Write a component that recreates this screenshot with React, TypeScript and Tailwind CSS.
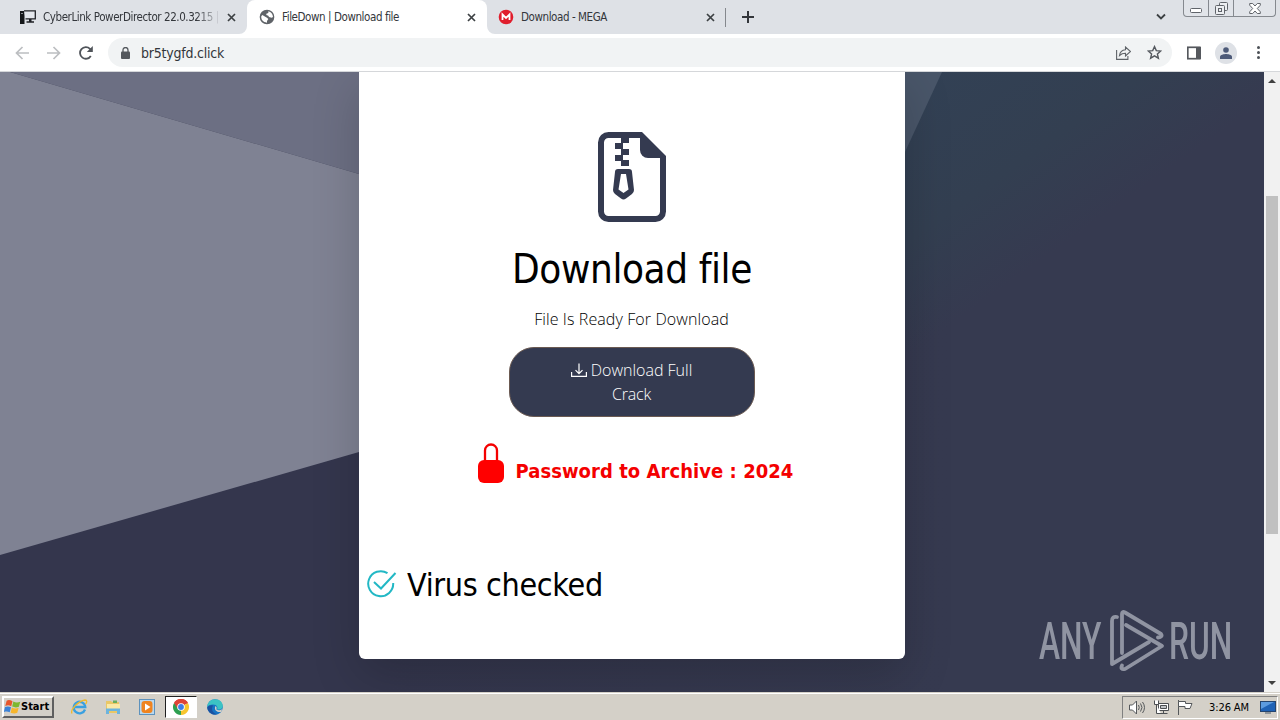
import type { ReactNode } from "react";

interface TabProps {
  title: string;
  icon: ReactNode;
  active?: boolean;
  faded?: boolean;
  className: string;
  titleClass: string;
}

function CloseIcon() {
  return (
    <svg className="h-[9px] w-[9px] shrink-0 text-[#3c4043]" viewBox="0 0 9 9" stroke="currentColor" strokeWidth={1.7}>
      <path d="M1 1l7 7M8 1l-7 7" />
    </svg>
  );
}

function Tab({ title, icon, active, faded, className, titleClass }: TabProps) {
  return (
    <div
      className={`relative flex h-[34px] shrink-0 items-center ${className} ${
        active ? "rounded-t-lg bg-white" : ""
      }`}
    >
      {icon}
      <span
        className={`h-4 flex-1 whitespace-nowrap text-[11.5px] leading-4 tracking-[-0.42px] text-[#33363b] ${titleClass} ${
          faded ? "[mask-image:linear-gradient(to_right,black_86%,transparent_100%)]" : ""
        }`}
      >
        {title}
      </span>
      <CloseIcon />
      {active && (
        <>
          <svg className="absolute -left-2 bottom-0 h-2 w-2" viewBox="0 0 8 8" fill="#fff">
            <path d="M8 0v8H0a8 8 0 0 0 8-8z" />
          </svg>
          <svg className="absolute -right-2 bottom-0 h-2 w-2" viewBox="0 0 8 8" fill="#fff">
            <path d="M0 0v8h8a8 8 0 0 1-8-8z" />
          </svg>
        </>
      )}
    </div>
  );
}

function TabStrip() {
  return (
    <div className="flex h-[34px] shrink-0 bg-[#dee1e6]">
      <Tab
        className="w-[247px] pl-5 pr-[11px]"
        titleClass="ml-[7px] mr-[6px]"
        faded
        title="CyberLink PowerDirector 22.0.3215 |"
        icon={
          <svg className="h-4 w-4 shrink-0" viewBox="0 0 16 16">
            <path d="M0 2h4.500v13H0z" fill="#15171a" />
            <path d="M1 4.500h2" stroke="#8a8d92" />
            <path d="M4 1.800h11.300v8H5.500" fill="#e4e7ec" stroke="#202226" strokeWidth={1.300} />
            <path d="M9 10h2.500v2.500H9zM6.500 12.300h7.500v1.500H6.500z" fill="#202226" />
          </svg>
        }
      />
      <Tab
        className="w-60 pl-3 pr-[11px]"
        titleClass="ml-[7px] mr-2"
        active
        title="FileDown | Download file"
        icon={
          <svg className="h-4 w-4 shrink-0" viewBox="0 0 24 24" fill="#5f6368">
            <path d="M12 1a11 11 0 1 0 0 22 11 11 0 0 0 0-22zM5 9l5 3 2 1 2 2-2 3v2.500C6 20 3 16 3.400 11zM14 3.500c4 .8 6.800 4.400 7 8.500l-2 1-4-1-1-2-3-1V7l3-1z" fillRule="evenodd" />
          </svg>
        }
      />
      <Tab
        className="w-[238px] pl-[11px] pr-[10px]"
        titleClass="ml-[7px] mr-2"
        title="Download - MEGA"
        icon={
          <svg className="h-4 w-4 shrink-0" viewBox="0 0 16 16">
            <circle cx="8" cy="8" r="7.300" fill="#e01e2d" />
            <path d="M4.500 11V5.500L8 9l3.500-3.500V11" fill="none" stroke="#fff" strokeWidth={1.8} />
          </svg>
        }
      />
      <div className="mt-2 h-[19px] w-px bg-[#85888d]" />
      <svg className="ml-4 mt-[11px] h-3 w-3 text-[#33363b]" viewBox="0 0 12 12" stroke="currentColor" strokeWidth={2}>
        <path d="M6 0v12M0 6h12" />
      </svg>
      <svg className="ml-auto mr-[17px] mt-[13px] h-[8px] w-[10px] text-[#3c4043]" viewBox="0 0 10 8" fill="none" stroke="currentColor" strokeWidth={1.8}>
        <path d="M1 1.500l4 4 4-4" />
      </svg>
      <div className="mr-1 flex h-[17px] w-[93px] rounded-b-[4px] border border-t-0 border-[#85898f] bg-[#e1e4e9]">
        <div className="flex w-[25px] justify-center border-r border-[#85898f] pt-2">
          <svg className="h-[5px] w-3" viewBox="0 0 12 5" fill="#fff" stroke="#60646a">
            <rect x=".5" y=".5" width="11" height="4" rx="1" />
          </svg>
        </div>
        <div className="flex w-[25px] justify-center border-r border-[#85898f] pt-[2px]">
          <svg className="h-[13px] w-[13px]" viewBox="0 0 13 13" fill="#eceef1" stroke="#60646a">
            <rect x="4.500" y=".5" width="8" height="8" rx="1" />
            <rect x=".5" y="3.500" width="9" height="9" rx="1" />
            <rect x="3.500" y="6.500" width="3" height="3" />
          </svg>
        </div>
        <div className="flex flex-1 justify-center pt-[3px]">
          <svg className="h-[11px] w-3" viewBox="0 0 12 11" fill="#fff" stroke="#60646a">
            <path d="M.7.5h3L6 3 8.300.5h3v1.700L8.300 5.500l3 3.300v1.700h-3L6 8l-2.300 2.500h-3V8.800l3-3.300-3-3.300z" />
          </svg>
        </div>
      </div>
    </div>
  );
}

function Toolbar() {
  return (
    <div className="flex h-[38px] shrink-0 items-center border-b border-[#d5d7da] bg-white pl-[15px]">
      <svg className="h-[14px] w-[14px] text-[#bcbec1]" viewBox="0 0 14 14" fill="none" stroke="currentColor" strokeWidth={1.7}>
        <path d="M14 7H1.500M7.500 1l-6 6 6 6" />
      </svg>
      <svg className="ml-[18px] h-[14px] w-[14px] text-[#bcbec1]" viewBox="0 0 14 14" fill="none" stroke="currentColor" strokeWidth={1.7}>
        <path d="M0 7h12.500M6.500 1l6 6-6 6" />
      </svg>
      <svg className="ml-[18px] h-[14px] w-[14px] text-[#50545a]" viewBox="0 0 14 14" fill="none">
        <path d="M11.800 10A5.800 5.800 0 1 1 11 2.900L12.600 4.500" stroke="currentColor" strokeWidth={1.8} />
        <path d="M13.800 0v6H7.800z" fill="currentColor" />
      </svg>
      <div className="ml-[15px] flex h-[29px] w-[1064px] items-center rounded-full bg-[#f1f3f4] pl-[13px] pr-[10px]">
        <svg className="h-3 w-[9px]" viewBox="0 0 9 12">
          <path d="M2 5V3a2.500 2.500 0 0 1 5 0v2" fill="none" stroke="#54585d" strokeWidth={1.3} />
          <rect y="4.500" width="9" height="7.500" rx="1" fill="#54585d" />
        </svg>
        <span className="ml-[11px] flex-1 text-[14px] leading-5 tracking-[-0.22px] text-[#33363b]">br5tygfd.click</span>
        <svg className="h-[14px] w-[15px]" viewBox="0 0 15 14" fill="none" stroke="#5f6368" strokeWidth={1.1}>
          <path d="M.6 4v9.400h11.300V10" />
          <path d="M3.500 9.500C4 6 6 4 9.500 3.800V1l5 4.500-5 4.500V7.200C7 7.200 5 8 3.500 9.500z" />
        </svg>
        <svg className="ml-4 h-[15px] w-[15px]" viewBox="0 0 15 15" fill="none" stroke="#55595f" strokeWidth={1.4}>
          <path d="M7.500 1.600l1.800 4 4.400.4-3.300 2.900 1 4.300-3.900-2.300-3.900 2.300 1-4.300L1.300 6l4.400-.4z" />
        </svg>
      </div>
      <svg className="ml-[15px] h-[14px] w-[14px]" viewBox="0 0 14 14">
        <rect x=".8" y="1.300" width="12" height="11.400" fill="none" stroke="#55585d" strokeWidth={1.7} />
        <path d="M9 1h5v12H9z" fill="#55585d" />
      </svg>
      <div className="ml-[14px] flex h-[22px] w-[22px] items-center justify-center rounded-full bg-[#dee1e6]">
        <svg className="h-3 w-3" viewBox="0 0 12 12" fill="#4d5a78">
          <circle cx="6" cy="3" r="2.800" />
          <path d="M0 12V9.800C0 7.800 4 7 6 7s6 .8 6 2.800V12z" />
        </svg>
      </div>
      <svg className="ml-5 h-[13px] w-[3px]" viewBox="0 0 3 13" fill="#4c5056">
        <circle cx="1.500" cy="1.500" r="1.500" />
        <circle cx="1.500" cy="6.500" r="1.500" />
        <circle cx="1.500" cy="11.500" r="1.500" />
      </svg>
    </div>
  );
}

function Backdrop() {
  return (
    <svg className="absolute inset-0 h-full w-full" viewBox="0 0 1264 620" preserveAspectRatio="none">
      <defs>
        <linearGradient id="base">
          <stop offset="0.3" stopColor="#34364d" />
          <stop offset="0.75" stopColor="#363a50" />
        </linearGradient>
        <linearGradient id="glow" gradientUnits="userSpaceOnUse" x1="905" y1="0" x2="1040" y2="190">
          <stop offset="0" stopColor="#324155" />
          <stop offset="0.6" stopColor="#333f51" />
          <stop offset="1" stopColor="#333f51" stopOpacity="0" />
        </linearGradient>
      </defs>
      <rect width="1264" height="620" fill="url(#base)" />
      <path d="M700 0h564v300H700z" fill="url(#glow)" />
      <path d="M0 0h500v144L359 102 10 0z" fill="#6c6f83" />
      <path d="M0 0h10l349 102v278L0 483z" fill="#7f8293" />
      <path d="M880 0h62l-37 80h-25z" fill="#495669" />
    </svg>
  );
}

function ZipIcon() {
  return (
    <svg className="h-[90px] w-[68px]" viewBox="0 0 68 90" fill="#343a50">
      <path d="M42 3H10.500A7.500 7.500 0 0 0 3 10.500v69a7.500 7.500 0 0 0 7.500 7.500h47a7.500 7.500 0 0 0 7.500-7.500V25" fill="none" stroke="#343a50" strokeWidth={6} />
      <path d="M42 0h2l24 24v2H50a8 8 0 0 1-8-8z" />
      <path d="M23 5h8v6h-8zM17 11h7v6h-7zM23 17h8v6h-8zM17 23h7v6h-7zM23 28h8v6h-8zM23 6h2v24h-2z" />
      <path d="M20 37h11a3 3 0 0 1 3 3l2 18a5 5 0 0 1-2 4l-6 4.500a4 4 0 0 1-5 0L17 62a5 5 0 0 1-2-4l2-18a3 3 0 0 1 3-3zm3 5-2.500 15.500 5 3.500 5-3.500L28 42z" fillRule="evenodd" />
    </svg>
  );
}

function DownloadCard() {
  return (
    <div className="relative ml-[359px] flex h-[587px] w-[546px] flex-col items-center rounded-b-md bg-white pt-[60px] text-black shadow-[0_16px_48px_rgba(0,0,0,0.18)]">
      <ZipIcon />
      <h1 className="mt-[23px] whitespace-nowrap text-[40px] leading-[48px] tracking-[-0.4px]">Download file</h1>
      <p className="mt-[14px] pr-px font-['Open_Sans','Noto_Sans',sans-serif] text-base font-light leading-6 tracking-[0.1px] text-black">
        File Is Ready For Download
      </p>
      <button className="mt-4 h-[70px] w-[246px] rounded-[25px] border border-[#6b5a52] bg-[#343a50] px-12 text-center font-['Open_Sans','Noto_Sans',sans-serif] text-base font-light leading-6 text-white">
        <span className="flex items-center justify-center gap-1 pr-px">
          <svg className="h-[15px] w-4 shrink-0" viewBox="0 0 16 15" fill="none" stroke="currentColor" strokeWidth={1.2}>
            <path d="M.6 9v4.400h14.800V9M8 .5v10M4.500 7.200L8 10.700l3.500-3.500" />
          </svg>
          Download Full
        </span>
        <span className="block pr-px tracking-[-0.2px]">Crack</span>
      </button>
      <div className="mt-[26px] flex w-full pl-[119px] text-[#f40000]">
        <svg className="h-10 w-[26px]" viewBox="0 0 26 40">
          <path d="M7 19V7.500a6 6 0 0 1 12 0V19" fill="none" stroke="currentColor" strokeWidth={2.300} />
          <rect y="17" width="26" height="23" rx="6" fill="#ff0000" />
        </svg>
        <strong className="ml-[11.5px] mt-4 whitespace-nowrap text-[20px] font-bold leading-6 tracking-[0.05px]">
          Password to Archive : 2024
        </strong>
      </div>
      <div className="mt-[83px] flex w-full items-center pl-2">
        <svg className="mb-0.5 h-[30px] w-[30px]" viewBox="0 0 30 30" fill="none" stroke="#22b8c5" strokeWidth={2}>
          <path d="M20.500 4.200A12.500 12.500 0 1 0 26.200 14" />
          <path d="M7 13l7 6.500L28.500 4" />
        </svg>
        <h2 className="ml-[10px] whitespace-nowrap text-[32px] leading-[38px] tracking-[-0.35px]">Virus checked</h2>
      </div>
    </div>
  );
}

// Sits on top of the page in the lower right corner
function Watermark() {
  return (
    <div className="absolute bottom-[19px] right-[32px] flex h-[64px] w-[193px] items-center font-[Roboto,sans-serif] text-[52px] font-medium leading-[64px] text-[#9094a2]">
      <span className="mb-[-2px] w-[62px]">
        <span className="inline-block origin-left scale-x-[0.61]">ANY</span>
      </span>
      <svg className="ml-2 h-[62px] w-[56px] shrink-0" viewBox="0 0 56 62" fill="none" stroke="currentColor" strokeWidth={3.800} strokeLinejoin="round" strokeLinecap="round">
        <path d="M8 7Q3 6 3 11v43l37-22" />
        <path d="M13 43V4q0-3 3-1.500L52 24q2 3-3 3.500" />
        <path d="M17 15l36 21-37 23q-5 1-3-3.500" />
      </svg>
      <span className="mb-[-2px] ml-1 w-[61px]">
        <span className="inline-block origin-left scale-x-[0.61]">RUN</span>
      </span>
    </div>
  );
}

function Scrollbar() {
  return (
    <div className="flex w-4 shrink-0 flex-col items-center bg-[#f1f1f1]">
      <svg className="mt-[7px] h-1 w-2" viewBox="0 0 8 4" fill="#404040">
        <path d="M0 4l4-4 4 4z" />
      </svg>
      <div className="mt-[113px] h-[338px] w-3 bg-[#c0c0c0]" />
      <svg className="mb-[7px] mt-auto h-1 w-2" viewBox="0 0 8 4" fill="#404040">
        <path d="M0 0l4 4 4-4z" />
      </svg>
    </div>
  );
}

function Taskbar() {
  return (
    <div className="flex h-7 shrink-0 items-start border-t border-[#d4d0c8] bg-[#d4d0c8] pl-[2px] shadow-[inset_0_1px_0_#fff]">
      <div className="mt-[3px] flex h-[22px] w-[52px] items-center border-2 border-b-[#606060] border-l-white border-r-[#606060] border-t-white">
        <svg className="h-[16px] w-[17px] shrink-0" viewBox="0 0 16 15">
          <path d="M2.500 1.500C4.500.5 6 1 8 2L6.800 6.800C5 5.800 3.500 5.600 1.200 6.500z" fill="#e8562a" />
          <path d="M8.800 2.400c2 1 4 1.200 6.500.2L14 7.300c-2.200.9-4.200.7-6.300-.2z" fill="#7db72f" />
          <path d="M1 7.500c2-.9 3.800-.7 5.600.2L5.400 12.500C3.600 11.500 2 11.400-.2 12.200z" fill="#3c82d6" />
          <path d="M7.400 8c2 1 4 1.200 6.400.3l-1.300 4.700c-2.200.9-4.200.7-6.300-.2z" fill="#f7b62c" />
        </svg>
        <span className="text-[11px] font-bold leading-4 text-black">Start</span>
      </div>
      <svg className="ml-[17px] mt-[6px] h-4 w-[17px]" viewBox="0 0 17 16" fill="none">
        <path d="M14 10.500A5.800 5.800 0 1 1 14.300 8H4" stroke="#3aa0e0" strokeWidth={2.300} />
        <path d="M1 14.500C-1 11 7 2 14 1c2.500 0 2 2.500.5 4" stroke="#f0b92c" strokeWidth={1.300} />
      </svg>
      <svg className="ml-[17px] mt-[6px] h-4 w-4" viewBox="0 0 16 16">
        <path d="M1 2h5l1 1h7v11H1z" fill="#e9c766" />
        <path d="M2 5h13v5H2z" fill="#fbe9a6" />
        <path d="M1 15V9.500h14V15h-3v-3H4v3z" fill="#6cb4de" />
        <path d="M8 1.500h4V4H8z" fill="#6aae5f" />
      </svg>
      <svg className="ml-[18px] mt-[6px] h-4 w-4" viewBox="0 0 16 16">
        <rect x=".5" y=".5" width="15" height="15" fill="#b9d8ef" stroke="#5d92bd" />
        <rect x="2.500" y="2" width="11" height="12" rx="3" fill="#ef8420" />
        <path d="M6 4.500v7L11.500 8z" fill="#fff" />
      </svg>
      <div className="ml-[10px] mt-[3px] flex h-[22px] w-8 items-center justify-center border border-b-white border-l-[#202020] border-r-white border-t-[#202020] bg-white">
        <svg className="h-4 w-4" viewBox="0 0 16 16">
          <path d="M8 8L1.070 4A8 8 0 0 1 14.930 4z" fill="#de4437" />
          <path d="M8 8l6.930-4A8 8 0 0 1 8 16z" fill="#f7c52d" />
          <path d="M8 8v8A8 8 0 0 1 1.070 4z" fill="#2d9f50" />
          <path d="M8 4.200h7A8 8 0 0 0 1.070 4l3.500 5.500z" fill="#de4437" />
          <circle cx="8" cy="8" r="3.800" fill="#fff" />
          <circle cx="8" cy="8" r="2.900" fill="#3d7de8" />
        </svg>
      </div>
      <svg className="ml-[10px] mt-[6px] h-4 w-4" viewBox="0 0 16 16">
        <circle cx="8" cy="8" r="7.800" fill="#1673c4" />
        <path d="M.2 8C.5 3 4 .2 8 .2c5 0 8 3.600 7.800 7C15.600 10 13 11 10 10.500c1-1.500.5-5-4-5C3 5.500 1 6.500.2 8z" fill="#3cc3c4" />
        <path d="M6 6.500c-2.500 4 0 8 4 8.800C5 16.500.8 13 .2 8.500 1.500 6.500 4 5.800 6 6.500z" fill="#1b51a0" />
        <path d="M8.500 7c2 1 .7 3 1 3.500 1.500 1.200 4.500.8 6-.8L14 13c-4 .5-7.500-2-5.500-6z" fill="#d4d0c8" />
      </svg>
      <div className="ml-auto mr-0.5 mt-[3px] flex h-[23px] w-[156px] items-center border border-b-white border-l-[#808080] border-r-white border-t-[#808080] pl-[6px]">
        <svg className="h-[15px] w-4" viewBox="0 0 16 15" fill="#fff" stroke="#55585b">
          <path d="M.5 5h3L7.500 1v13l-4-4h-3z" />
          <path d="M9.500 5q1.500 2.500 0 5M11.500 3.500q3 4 0 8M13.500 2q4 5.500 0 11" fill="none" />
        </svg>
        <svg className="ml-2 h-[15px] w-4" viewBox="0 0 16 15" fill="#fff" stroke="#4c4f52">
          <path d="M5.500 3.500h10v7h-10zM7 13.500h7.500M10.500 11v2" />
          <path d="M7.500 5.500h6v3h-6z" fill="#c0c3c6" />
          <path d="M1.500.5v4h4v-4M3.500 4.500v9H8" />
        </svg>
        <svg className="ml-2 h-[15px] w-4" viewBox="0 0 16 15" fill="#fff" stroke="#55585b">
          <path d="M1.500 0v15" />
          <path d="M1.500 1.500h7v2h6.500l-2 5H8v-2H1.500z" />
        </svg>
        <span className="ml-4 whitespace-nowrap text-[11px] leading-4 tracking-[-0.1px] text-black">3:26 AM</span>
        <svg className="ml-auto mr-px h-[13px] w-4" viewBox="0 0 16 13">
          <rect x=".5" y=".5" width="15" height="10" fill="#1f62b5" stroke="#24446e" />
          <path d="M1 1h13L1 8z" fill="#5c9bdf" />
          <path d="M5 11.500h6v1H5z" fill="#4a5a6d" />
        </svg>
      </div>
    </div>
  );
}

export default function App() {
  return (
    <div className="flex h-[720px] w-[1280px] flex-col overflow-hidden font-['DejaVu_Sans_Condensed','DejaVu_Sans',sans-serif]">
      <TabStrip />
      <Toolbar />
      <div className="flex h-[620px] shrink-0">
        <main className="relative w-[1264px] overflow-hidden">
          <Backdrop />
          <DownloadCard />
          <Watermark />
        </main>
        <Scrollbar />
      </div>
      <Taskbar />
    </div>
  );
}
